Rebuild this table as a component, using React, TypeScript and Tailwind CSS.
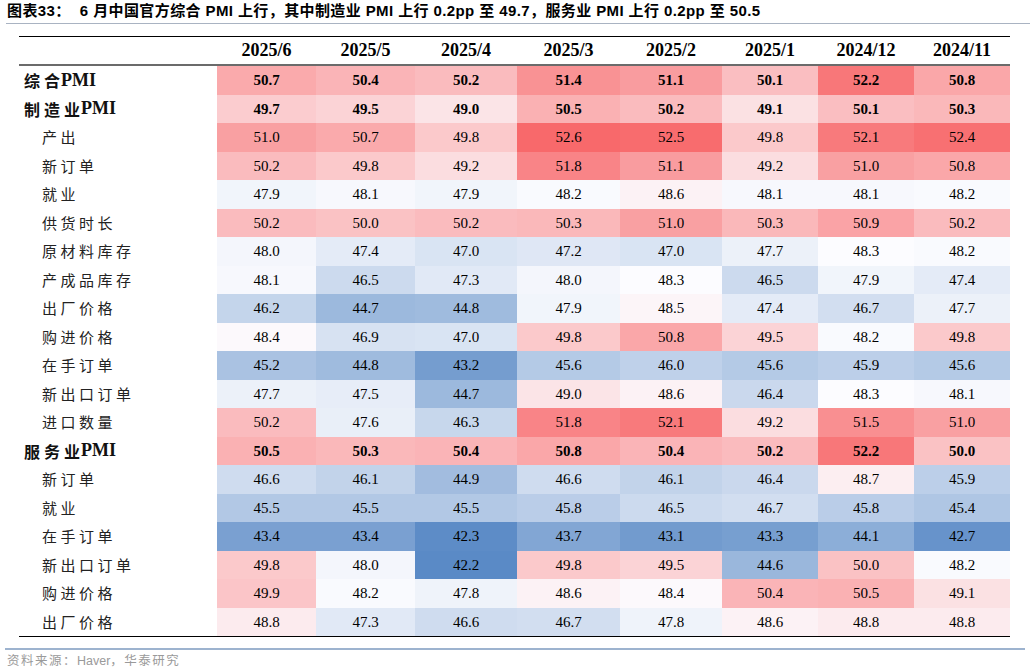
import React from "react";

type Row = { label: string; pmi?: boolean; bold?: boolean; sub?: boolean; v: number[] };

const cols = ["2025/6", "2025/5", "2025/4", "2025/3", "2025/2", "2025/1", "2024/12", "2024/11"];

const rows: Row[] = [
  { label: "综合", pmi: true, bold: true, v: [50.7, 50.4, 50.2, 51.4, 51.1, 50.1, 52.2, 50.8] },
  { label: "制造业", pmi: true, bold: true, v: [49.7, 49.5, 49.0, 50.5, 50.2, 49.1, 50.1, 50.3] },
  { label: "产出", sub: true, v: [51.0, 50.7, 49.8, 52.6, 52.5, 49.8, 52.1, 52.4] },
  { label: "新订单", sub: true, v: [50.2, 49.8, 49.2, 51.8, 51.1, 49.2, 51.0, 50.8] },
  { label: "就业", sub: true, v: [47.9, 48.1, 47.9, 48.2, 48.6, 48.1, 48.1, 48.2] },
  { label: "供货时长", sub: true, v: [50.2, 50.0, 50.2, 50.3, 51.0, 50.3, 50.9, 50.2] },
  { label: "原材料库存", sub: true, v: [48.0, 47.4, 47.0, 47.2, 47.0, 47.7, 48.3, 48.2] },
  { label: "产成品库存", sub: true, v: [48.1, 46.5, 47.3, 48.0, 48.3, 46.5, 47.9, 47.4] },
  { label: "出厂价格", sub: true, v: [46.2, 44.7, 44.8, 47.9, 48.5, 47.4, 46.7, 47.7] },
  { label: "购进价格", sub: true, v: [48.4, 46.9, 47.0, 49.8, 50.8, 49.5, 48.2, 49.8] },
  { label: "在手订单", sub: true, v: [45.2, 44.8, 43.2, 45.6, 46.0, 45.6, 45.9, 45.6] },
  { label: "新出口订单", sub: true, v: [47.7, 47.5, 44.7, 49.0, 48.6, 46.4, 48.3, 48.1] },
  { label: "进口数量", sub: true, v: [50.2, 47.6, 46.3, 51.8, 52.1, 49.2, 51.5, 51.0] },
  { label: "服务业", pmi: true, bold: true, v: [50.5, 50.3, 50.4, 50.8, 50.4, 50.2, 52.2, 50.0] },
  { label: "新订单", sub: true, v: [46.6, 46.1, 44.9, 46.6, 46.1, 46.4, 48.7, 45.9] },
  { label: "就业", sub: true, v: [45.5, 45.5, 45.5, 45.8, 46.5, 46.7, 45.8, 45.4] },
  { label: "在手订单", sub: true, v: [43.4, 43.4, 42.3, 43.7, 43.1, 43.3, 44.1, 42.7] },
  { label: "新出口订单", sub: true, v: [49.8, 48.0, 42.2, 49.8, 49.5, 44.6, 50.0, 48.2] },
  { label: "购进价格", sub: true, v: [49.9, 48.2, 47.8, 48.6, 48.4, 50.4, 50.5, 49.1] },
  { label: "出厂价格", sub: true, v: [48.8, 47.3, 46.6, 46.7, 47.8, 48.6, 48.8, 48.8] },
];

// excel style 3-colour scale: blue (min) - white (median) - red (max)
const all = rows.flatMap((r) => r.v).sort((a, b) => a - b);
const min = all[0];
const max = all[all.length - 1];
const mid = (all[all.length / 2 - 1] + all[all.length / 2]) / 2;

const mix = (a: number[], b: number[], t: number) =>
  `rgb(${a.map((x, i) => Math.round(x + (b[i] - x) * t)).join(",")})`;

function cellColor(v: number) {
  const white = [252, 252, 255];
  if (v >= mid) return mix(white, [248, 105, 107], (v - mid) / (max - mid));
  return mix(white, [90, 138, 198], (mid - v) / (mid - min));
}

const grid = "grid grid-cols-[198px_99px_99px_102px_103px_102px_96px_96px_96px]";

export default function App() {
  return (
    <div className="w-[1030px] h-[672px] bg-white text-black overflow-hidden">
      {/* title */}
      <div className="ml-[6px] h-[24px] border-b border-[#a9b3c2] pl-[1px] pt-[2px] text-[15px] leading-[18px] font-bold tracking-[0.4px] font-['Liberation_Sans','Noto_Sans_CJK_SC',sans-serif] whitespace-nowrap">
        图表33：&nbsp;&nbsp;6 月中国官方综合 PMI 上行，其中制造业 PMI 上行 0.2pp 至 49.7，服务业 PMI 上行 0.2pp 至 50.5
      </div>

      {/* table */}
      <div className="ml-[19px] mt-[12px] w-[991px] border-t border-black border-b font-['Liberation_Serif','Noto_Sans_CJK_SC',serif]">
        <div className={`${grid} h-[29px] border-b-2 border-[#6b6b6b] items-center`}>
          <div />
          {cols.map((c) => (
            <div key={c} className="text-center text-[18px] font-bold">
              {c}
            </div>
          ))}
        </div>
        {rows.map((r, i) => (
          <div key={i} className={`${grid} h-[28.5px] items-stretch`}>
            {r.pmi ? (
              <div className="flex items-center pl-[5px] font-bold text-[#111]">
                <span className="text-[16px] tracking-[4px] font-['Noto_Sans_CJK_SC',sans-serif]">{r.label}</span>
                <span className="text-[18px] -ml-[3px]">PMI</span>
              </div>
            ) : (
              <div className="flex items-center pl-[23px] text-[15px] tracking-[3.5px] text-[#222] font-['Noto_Sans_CJK_SC',sans-serif]">
                {r.label}
              </div>
            )}
            {r.v.map((v, j) => (
              <div
                key={j}
                className={`flex items-center justify-center text-[15px] ${r.bold ? "font-bold" : ""}`}
                style={{ backgroundColor: cellColor(v) }}
              >
                {v.toFixed(1)}
              </div>
            ))}
          </div>
        ))}
      </div>

      {/* source */}
      <div className="ml-[5px] mr-[5px] mt-[11px] border-t-2 border-[#9db3cf] pl-[2px] pt-[1px] text-[12.5px] leading-[20px] tracking-[1.5px] text-[#9a9a9a] font-['Liberation_Sans','Noto_Sans_CJK_SC',sans-serif]">
        资料来源：<span className="tracking-normal">Haver</span>，华泰研究
      </div>
    </div>
  );
}
